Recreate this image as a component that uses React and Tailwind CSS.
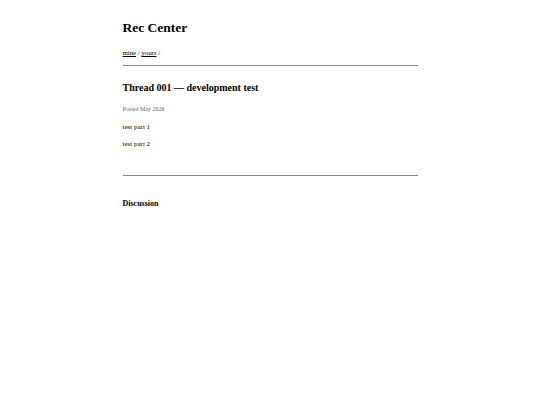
export default function App() {
  return (
    <div className="min-h-[405px] bg-white text-black" style={{ fontFamily: '"Liberation Serif", "Times New Roman", serif' }}>
      <div className="mx-auto w-[295px] pt-[19px]">
        <h1 className="text-[13.5px] font-bold leading-[18px]">Rec Center</h1>
        <nav className="mt-[11px] text-[6.8px] leading-[9px]">
          <a href="#" className="underline">mine</a> / <a href="#" className="underline">yours</a> /
        </nav>
        <hr className="mt-[8px] border-t border-[#888]" />
        <h2 className="mt-[15px] text-[10px] font-bold leading-[13px]">Thread 001 — development test</h2>
        <p className="mt-[11px] text-[6px] leading-[8px] text-[#666]">Posted May 2026</p>
        <p className="mt-[10px] text-[7px] leading-[9px]">test part 1</p>
        <p className="mt-[8px] text-[7px] leading-[9px]">test part 2</p>
        <hr className="mt-[26px] border-t border-[#888]" />
        <h3 className="mt-[23px] text-[8px] font-bold leading-[10px]">Discussion</h3>
      </div>
    </div>
  );
}
